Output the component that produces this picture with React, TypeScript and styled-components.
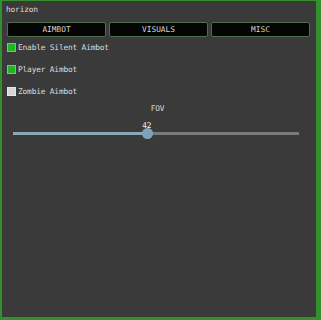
import React from "react";
import styled, { createGlobalStyle } from "styled-components";

const GlobalStyle = createGlobalStyle`
  html, body { margin: 0; padding: 0; background: #2a2a2a; }
  * { box-sizing: border-box; }
`;

const Window = styled.div`
  width: 321px;
  height: 320px;
  background: #3b3a3b;
  border-style: solid;
  border-color: #33902c;
  border-width: 1px 5px 3px 2px;
  font-family: "DejaVu Sans Mono", "Liberation Mono", monospace;
  font-size: 7.8px;
  letter-spacing: -0.15px;
  color: #dcdcdc;
  display: flex;
  flex-direction: column;
`;

const TitleBar = styled.div`
  height: 18px;
  padding: 4px 0 0 4px;
  line-height: 9px;
`;

const Tabs = styled.div`
  display: grid;
  grid-template-columns: repeat(3, 1fr);
  gap: 3px;
  padding: 3px 6px 0 5px;
`;

const Tab = styled.button`
  height: 15px;
  background: #050505;
  border: 1px solid #4f6e4b;
  border-radius: 2px;
  color: #d8d8d8;
  font: inherit;
  padding: 0;
  line-height: 13px;
  text-align: center;
`;

const Options = styled.div`
  display: flex;
  flex-direction: column;
  gap: 13px;
  padding: 6px 0 0 5px;
`;

const Row = styled.div`
  display: flex;
  align-items: center;
  gap: 2px;
  height: 9px;
`;

const Box = styled.span<{ $on: boolean }>`
  width: 9px;
  height: 9px;
  background: ${(p) => (p.$on ? "#22b326" : "#d6d6d6")};
  border: 1px solid ${(p) => (p.$on ? "#79c873" : "#e6e6e6")};
`;

const SliderBlock = styled.div`
  display: flex;
  flex-direction: column;
  padding: 8px 17px 0 11px;
`;

const SliderLabel = styled.div`
  text-align: center;
  line-height: 9px;
  padding-left: 3px;
`;

const Track = styled.div`
  position: relative;
  margin-top: 19px;
  height: 3px;
  background: #7a7a7a;
`;

const Fill = styled.div`
  height: 100%;
  background: #8ba6b6;
`;

const Thumb = styled.div`
  position: absolute;
  top: -4px;
  width: 11px;
  height: 11px;
  margin-left: -5px;
  border-radius: 50%;
  background: #7ea2bb;
`;

const Value = styled.div`
  position: absolute;
  top: -10px;
  transform: translateX(-50%);
  line-height: 8px;
  color: #eeeeee;
`;

const options = [
  { label: "Enable Silent Aimbot", on: true },
  { label: "Player Aimbot", on: true },
  { label: "Zombie Aimbot", on: false },
];

export default function App() {
  const pct = 46.8;
  return (
    <>
      <GlobalStyle />
      <Window>
        <TitleBar>horizon</TitleBar>
        <Tabs>
          <Tab>AIMBOT</Tab>
          <Tab>VISUALS</Tab>
          <Tab>MISC</Tab>
        </Tabs>
        <Options>
          {options.map((o) => (
            <Row key={o.label}>
              <Box $on={o.on} />
              <span>{o.label}</span>
            </Row>
          ))}
        </Options>
        <SliderBlock>
          <SliderLabel>FOV</SliderLabel>
          <Track>
            <Fill style={{ width: `${pct}%` }} />
            <Thumb style={{ left: `${pct}%` }} />
            <Value style={{ left: `${pct}%` }}>42</Value>
          </Track>
        </SliderBlock>
      </Window>
    </>
  );
}
